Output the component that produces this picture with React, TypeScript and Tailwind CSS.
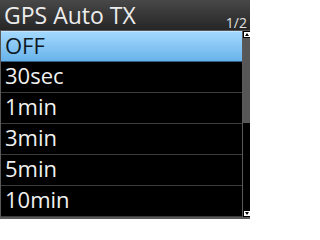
const items = ["OFF", "30sec", "1min", "3min", "5min", "10min"];

export default function App() {
  return (
    <div
      className="flex h-[219px] w-[250px] flex-col overflow-hidden bg-black"
      style={{ fontFamily: '"Open Sans", "Noto Sans", sans-serif' }}
    >
      {/* Title bar */}
      <div className="flex h-[31px] shrink-0 items-start justify-between border-b border-[#555] bg-gradient-to-b from-[#484848] to-[#262626] pl-[4px] pr-[3px]">
        <span className="text-[23px] leading-[31px] text-[#ececec]">GPS Auto TX</span>
        <span className="mt-[16px] text-[14px] leading-[14px] text-[#e0e0e0]">1/2</span>
      </div>

      {/* List + scrollbar */}
      <div className="flex flex-1 border-b-2 border-l border-[#5a5a5a]">
        <ul className="flex flex-1 flex-col">
          {items.map((item, i) =>
            i === 0 ? (
              <li
                key={item}
                className="flex h-[31px] items-center border-t border-b border-t-[#c4e6ff] border-b-[#355f88] bg-gradient-to-b from-[#a3d8fd] to-[#68b3eb] pb-[3px] pl-[4px] text-[22px] text-[#0c1824]"
              >
                {item}
              </li>
            ) : (
              <li
                key={item}
                className="flex h-[31px] items-center border-b border-[#3c3c3c] pb-[3px] pl-[4px] text-[22px] text-[#f0f0f0]"
              >
                {item}
              </li>
            )
          )}
        </ul>
        <div className="flex w-[8px] flex-col border-l border-[#5a5a5a] bg-black">
          <div className="flex h-[7px] items-center justify-center">
            <svg width="6" height="5" viewBox="0 0 6 5">
              <rect width="6" height="5" fill="#fff" />
              <path d="M3 1 L5 4 L1 4 Z" fill="#000" />
            </svg>
          </div>
          <div className="h-[85px] bg-[#575757]" />
          <div className="flex-1" />
          <div className="flex h-[7px] items-center justify-center">
            <svg width="6" height="5" viewBox="0 0 6 5">
              <rect width="6" height="5" fill="#fff" />
              <path d="M1 1 L5 1 L3 4 Z" fill="#000" />
            </svg>
          </div>
        </div>
      </div>
    </div>
  );
}
